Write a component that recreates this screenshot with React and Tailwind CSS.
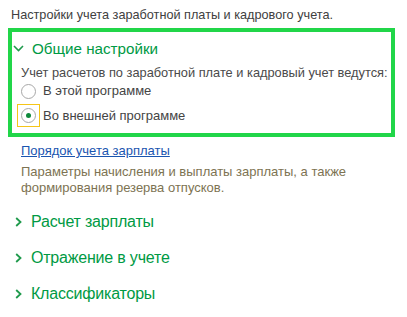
import React from 'react';

function ChevronDown() {
  return (
    <svg width="11" height="7" viewBox="0 0 11 7" className="shrink-0">
      <path d="M1 1 L5.5 5.5 L10 1" fill="none" stroke="#1f9a4c" strokeWidth="1.6" />
    </svg>
  );
}

function ChevronRight() {
  return (
    <svg width="7" height="10" viewBox="0 0 7 10" className="shrink-0">
      <path d="M1.2 1 L5.5 5 L1.2 9" fill="none" stroke="#1f9a4c" strokeWidth="1.8" />
    </svg>
  );
}

function Radio({ checked, focused, label }) {
  return (
    <div className="flex items-center h-[23px]">
      <div className={`w-[23px] h-[23px] flex items-center justify-center -ml-[4px] ${focused ? 'border border-[#f5c518]' : ''}`}>
        <div className="w-[15px] h-[15px] rounded-full border border-[#a8a8a8] bg-white flex items-center justify-center">
          {checked && <div className="w-[5px] h-[5px] rounded-full bg-[#0f8a3c]" />}
        </div>
      </div>
      <span className="ml-[3px] text-[13px] text-[#444]">{label}</span>
    </div>
  );
}

function Section({ title }) {
  return (
    <div className="flex items-center h-[36px] pl-[15px] gap-[9px]">
      <ChevronRight />
      <span className="text-[16px] text-[#009a44] tracking-[-0.2px]">{title}</span>
    </div>
  );
}

export default function App() {
  return (
    <div className="w-[407px] h-[317px] bg-white overflow-hidden" style={{ fontFamily: '"Liberation Sans", Arial, sans-serif' }}>
      <div className="pt-[7px] pl-[11px] text-[12.7px] text-[#404040] leading-[16px]">
        Настройки учета заработной платы и кадрового учета.
      </div>

      <div className="mt-[5px] ml-[8px] w-[387px] h-[109px] border-4 border-[#21d649]">
        <div className="flex items-center gap-[8px] pl-[1px] pt-[7px] h-[26px]">
          <ChevronDown />
          <span className="text-[15.2px] text-[#009a44] leading-[18px]">Общие настройки</span>
        </div>
        <div className="pl-[9px] pt-[7px]">
          <div className="text-[12.8px] text-[#4a4a4a] leading-[16px] whitespace-nowrap">
            Учет расчетов по заработной плате и кадровый учет ведутся:
          </div>
          <div className="h-[20px] flex items-center">
            <Radio label="В этой программе" />
          </div>
          <div className="mt-[3px]">
            <Radio checked focused label="Во внешней программе" />
          </div>
        </div>
      </div>

      <div className="pl-[21px] pt-[6px]">
        <a className="block w-fit text-[13px] text-[#1a55b0] underline leading-[16px]">Порядок учета зарплаты</a>
        <div className="mt-[5px] text-[13px] text-[#7d7352] leading-[16px] w-[330px]">
          Параметры начисления и выплаты зарплаты, а также формирования резерва отпусков.
        </div>
      </div>

      <div className="mt-[8px]">
        <Section title="Расчет зарплаты" />
        <Section title="Отражение в учете" />
        <Section title="Классификаторы" />
      </div>
    </div>
  );
}
